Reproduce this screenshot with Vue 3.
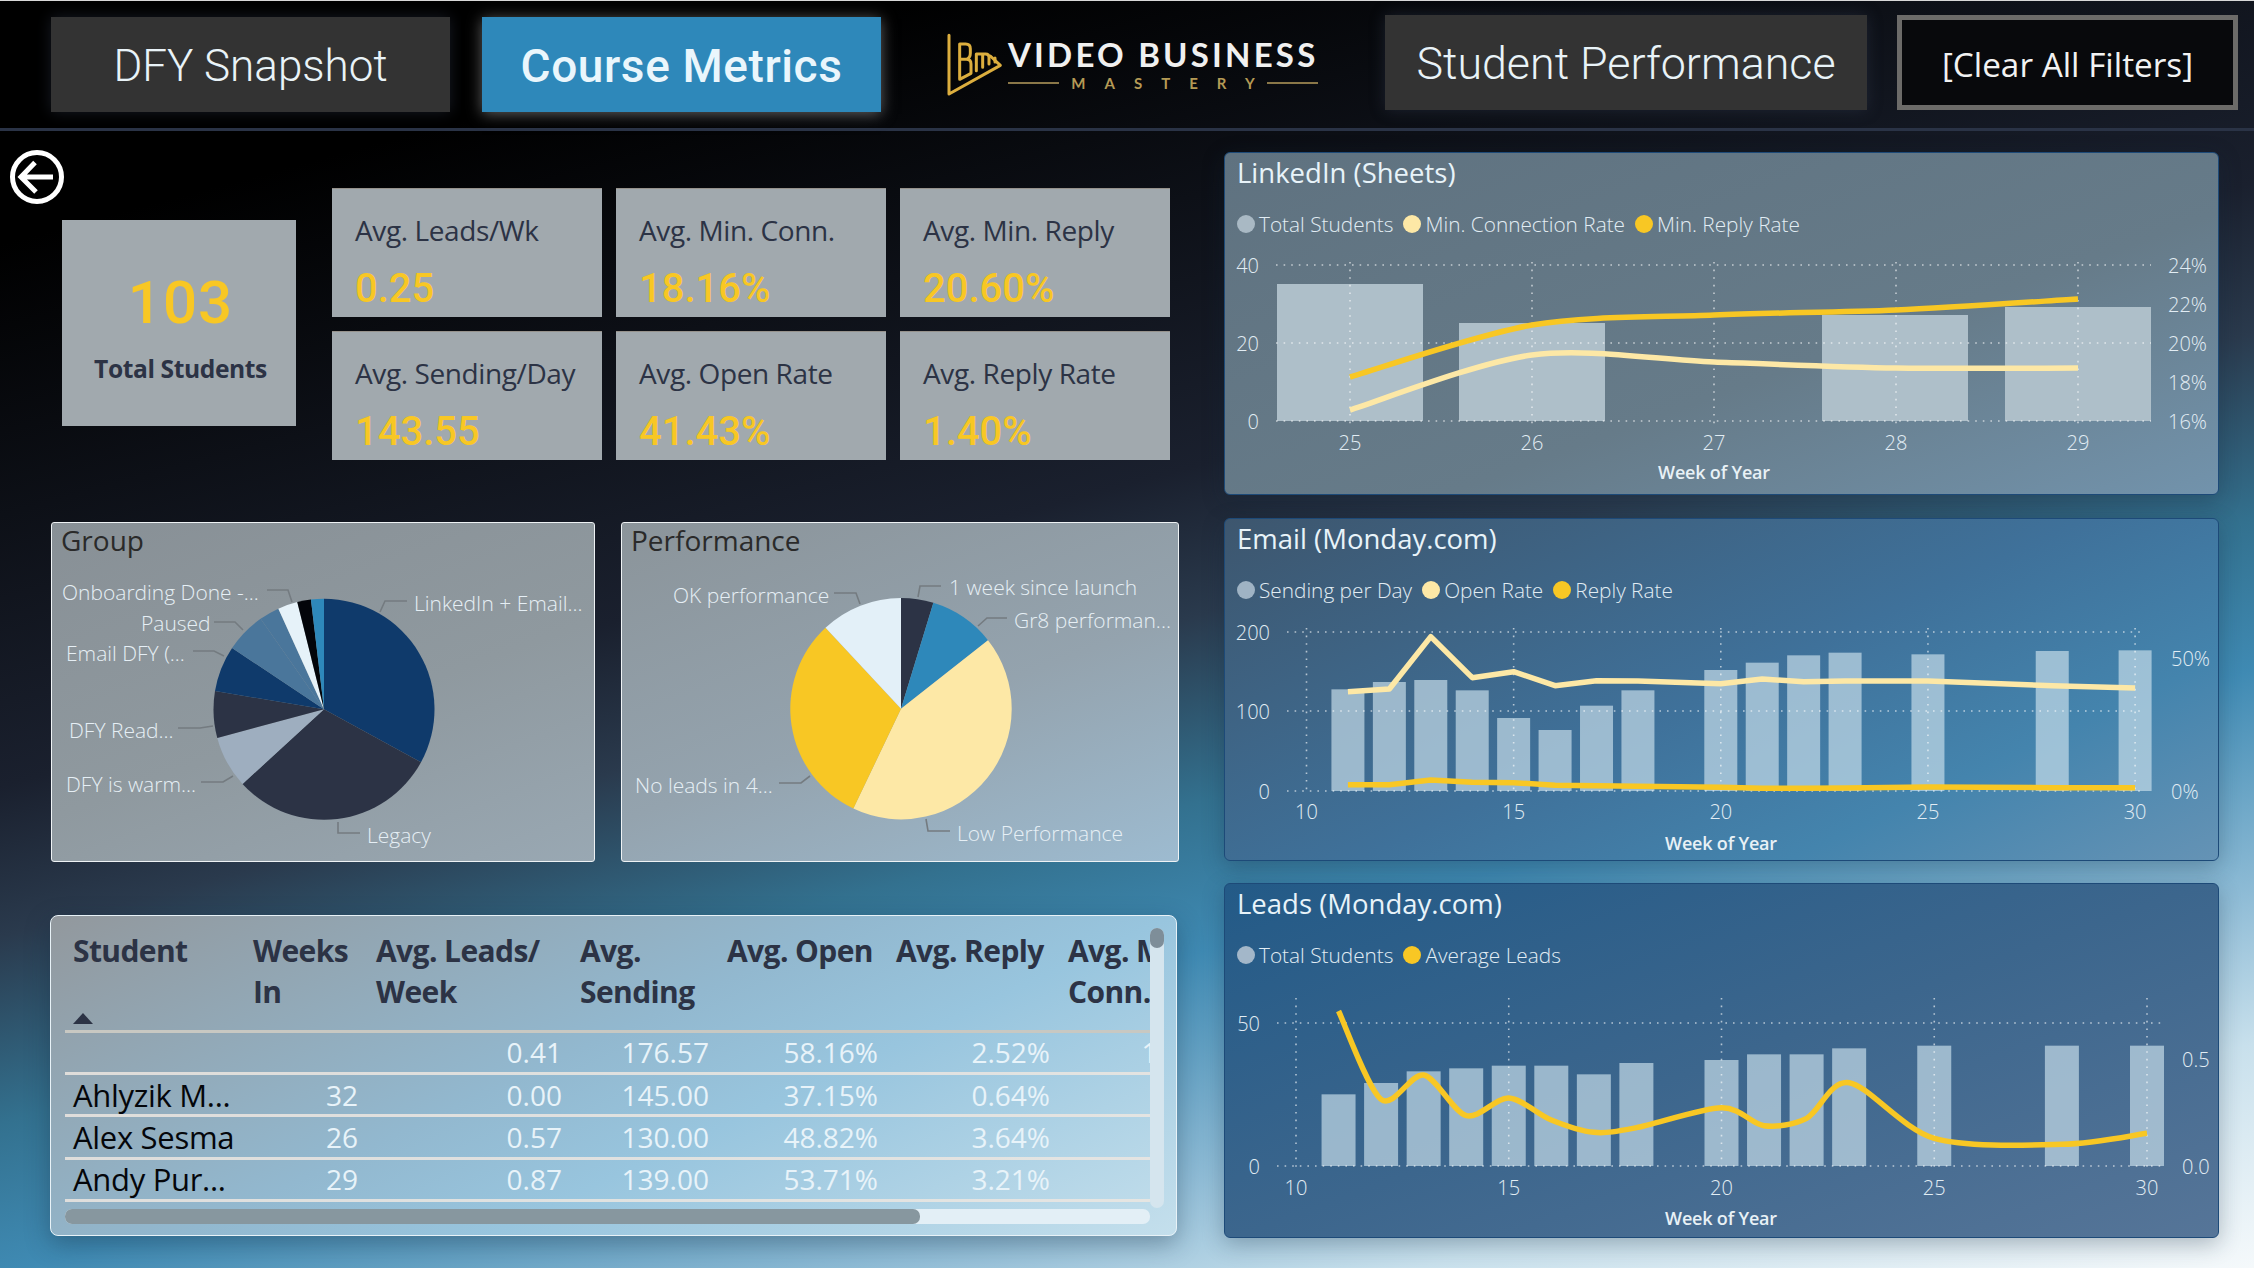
<template>
  <div class="page">
    <header class="topbar">
      <div class="tab tab-dark tab-first">DFY Snapshot</div>
      <div class="tab tab-active">Course Metrics</div>
      <div class="logo">
        <svg class="logo-mark" viewBox="40 40 180 195" width="60" height="65">
          <path d="M52 50V226L206 140L176 112" />
          <path d="M84 76V182L118 164V136Q118 122 104 122Q116 118 116 104V90Q116 76 102 76Z M84 122H104" />
          <path d="M134 156V106H162Q172 106 172 116V136 M153 106V146 M190 130V118" />
        </svg>
        <div class="logo-words">
          <div class="logo-name">VIDEO BUSINESS</div>
          <div class="logo-sub"><i></i><span>MASTERY</span><i></i></div>
        </div>
      </div>
      <div class="tab tab-dark tab-wide">Student Performance</div>
      <div class="clear">[Clear All Filters]</div>
    </header>
    <div class="divider"></div>

    <main class="content">
      <section class="left">
        <div class="kpis">
          <div class="kpi-side">
            <svg class="back" viewBox="0 0 56 56" width="56" height="56">
              <circle cx="28" cy="28" r="24.5" />
              <path d="M44 28H12M26 13.5L12 28L27 43" />
            </svg>
            <div class="total">
              <div class="total-num">103</div>
              <div class="total-label">Total Students</div>
            </div>
          </div>
          <div class="kpi-grid">
            <div v-for="k in kpis" :key="k[0]" class="kpi">
              <div class="kpi-label">{{ k[0] }}</div>
              <div class="kpi-value">{{ k[1] }}</div>
            </div>
          </div>
        </div>

        <div class="pies">
          <div v-for="p in pies" :key="p.title" class="pie-panel" :class="p.cls">
            <div class="pie-title">{{ p.title }}</div>
            <svg class="pie-svg" :viewBox="p.viewBox" :width="p.w" :height="p.h">
              <path v-for="(s, i) in p.slices" :key="i" :d="s.d" :fill="s.color" />
              <polyline v-for="(l, i) in p.labels" :key="'l' + i" class="leader" :points="l.line" />
              <text v-for="(l, i) in p.labels" :key="'t' + i" class="pie-label" :x="l.x" :y="l.y" dominant-baseline="central">{{ l.text }}</text>
            </svg>
          </div>
        </div>

        <div class="table-panel">
          <div class="table-clip">
            <table>
              <colgroup>
                <col v-for="w in colWidths" :key="w" :width="w" />
              </colgroup>
              <thead>
                <tr>
                  <th v-for="(h, i) in headers" :key="i">
                    {{ h }}
                    <div v-if="i === 0" class="sort"></div>
                  </th>
                </tr>
              </thead>
              <tbody>
                <tr v-for="(r, i) in rows" :key="i">
                  <td v-for="(c, j) in r" :key="j" :class="j === 0 ? 'name' : 'num'">{{ c }}</td>
                </tr>
              </tbody>
            </table>
          </div>
          <div class="vscroll"><div class="vthumb"></div></div>
          <div class="hscroll"><div class="hthumb"></div></div>
        </div>
      </section>

      <section class="right">
        <div v-for="c in charts" :key="c.title" class="chart" :class="c.cls" :style="{ height: c.height + 'px' }">
          <div class="chart-title">{{ c.title }}</div>
          <div class="legend">
            <span v-for="l in c.legend" :key="l[0]" class="legend-item">
              <b :style="{ background: l[1] }"></b>{{ l[0] }}
            </span>
          </div>
          <svg class="chart-svg" :viewBox="`1225 ${c.top + 87} 993 ${c.height - 88}`" width="993" :height="c.height - 88">
            <rect v-for="b in c.bars" :key="b.x" class="bar" :style="{ fill: c.barColor }" :x="b.x" :y="b.y" :width="c.barW" :height="c.zero - b.y" />
            <line v-for="y in c.hy" :key="'h' + y" class="grid" :x1="c.hx[0]" :x2="c.hx[1]" :y1="y" :y2="y" />
            <line v-for="w in c.ticks" :key="'v' + w[0]" class="grid" :x1="w[1]" :x2="w[1]" :y1="c.vy[0]" :y2="c.vy[1]" />
            <path v-for="l in c.lines" :key="l.color" class="series" :d="l.d" :stroke="l.color" />
            <text v-for="t in c.left" :key="'a' + t[0]" class="axis" :x="c.leftX" :y="t[1]" text-anchor="end" dominant-baseline="central">{{ t[0] }}</text>
            <text v-for="t in c.right" :key="'b' + t[0]" class="axis" :x="c.rightX" :y="t[1]" dominant-baseline="central">{{ t[0] }}</text>
            <text v-for="w in c.ticks" :key="'x' + w[0]" class="axis" :x="w[1]" :y="c.tickY" text-anchor="middle" dominant-baseline="central">{{ w[0] }}</text>
            <text class="axis-title" :x="c.midX" :y="c.titleY" text-anchor="middle" dominant-baseline="central">Week of Year</text>
          </svg>
        </div>
      </section>
    </main>
  </div>
</template>

<script setup>
const kpis = [
  ['Avg. Leads/Wk', '0.25'],
  ['Avg. Min. Conn.', '18.16%'],
  ['Avg. Min. Reply', '20.60%'],
  ['Avg. Sending/Day', '143.55'],
  ['Avg. Open Rate', '41.43%'],
  ['Avg. Reply Rate', '1.40%'],
]

function slicePath(cx, cy, r, from, to) {
  const pt = (deg) => {
    const a = (deg * Math.PI) / 180
    return `${(cx + r * Math.sin(a)).toFixed(2)} ${(cy - r * Math.cos(a)).toFixed(2)}`
  }
  return `M${cx} ${cy}L${pt(from)}A${r} ${r} 0 ${to - from > 180 ? 1 : 0} 1 ${pt(to)}Z`
}

function makeSlices(cx, cy, r, parts) {
  let from = 0
  return parts.map(([to, color]) => {
    const s = { d: slicePath(cx, cy, r, from, to), color }
    from = to
    return s
  })
}

// pie coordinates are page pixels, the viewBox shifts them into the panel
const pies = [
  {
    title: 'Group',
    cls: 'pie-group',
    viewBox: '52 564 541 296',
    w: 541,
    h: 296,
    slices: makeSlices(324, 709.3, 110.5, [
      [118.6, '#0f3a6b'],
      [227.5, '#2c3345'],
      [255, '#9eaebf'],
      [279.5, '#2c3345'],
      [303.7, '#0f3a6b'],
      [325, '#4a769b'],
      [335.6, '#4a769b'],
      [346, '#e6f2f9'],
      [353.2, '#03050a'],
      [360, '#2e88ba'],
    ]),
    labels: [
      { text: 'Onboarding Done -...', x: 62, y: 592, line: '292,602 288,590 267,590' },
      { text: 'Paused', x: 141, y: 623, line: '243,630 235,622 214,622' },
      { text: 'Email DFY (...', x: 66, y: 653, line: '224,656 214,651 193,651' },
      { text: 'DFY Read...', x: 69, y: 730, line: '213,726 200,728 178,728' },
      { text: 'DFY is warm...', x: 66, y: 784, line: '233,776 223,782 201,782' },
      { text: 'Legacy', x: 367, y: 835, line: '338,822 338,833 360,833' },
      { text: 'LinkedIn + Email...', x: 414, y: 603, line: '380,612 385,601 407,601' },
    ],
  },
  {
    title: 'Performance',
    cls: 'pie-perf',
    viewBox: '622 564 555 296',
    w: 555,
    h: 296,
    slices: makeSlices(901, 708.7, 110.7, [
      [17, '#2c3345'],
      [51.8, '#2e88ba'],
      [205.5, '#fde8a6'],
      [317, '#f8c724'],
      [360, '#e3f0f8'],
    ]),
    labels: [
      { text: 'OK performance', x: 673, y: 595, line: '860,604 856,593 834,593' },
      { text: '1 week since launch', x: 949, y: 587, line: '918,597 920,586 941,586' },
      { text: 'Gr8 performan...', x: 1014, y: 620, line: '978,626 987,618 1007,618' },
      { text: 'No leads in 4...', x: 635, y: 785, line: '810,776 801,783 779,783' },
      { text: 'Low Performance', x: 957, y: 833, line: '926,819 928,831 950,831' },
    ],
  },
]

const colWidths = [180, 123, 204, 147, 169, 172, 186]
const headers = ['Student', 'Weeks\nIn', 'Avg. Leads/\nWeek', 'Avg.\nSending', 'Avg. Open', 'Avg. Reply', 'Avg. Min.\nConn.']
const rows = [
  ['', '', '0.41', '176.57', '58.16%', '2.52%', '19.85%'],
  ['Ahlyzik M...', '32', '0.00', '145.00', '37.15%', '0.64%', '9.52%'],
  ['Alex Sesma', '26', '0.57', '130.00', '48.82%', '3.64%', '7.41%'],
  ['Andy Pur...', '29', '0.87', '139.00', '53.71%', '3.21%', '8.33%'],
]

function straight(pts) {
  return 'M' + pts.map((p) => p.join(' ')).join('L')
}

// cardinal spline, good enough for the power bi smooth lines
function smooth(pts, k = 0.15) {
  let d = `M${pts[0][0]} ${pts[0][1]}`
  for (let i = 0; i < pts.length - 1; i++) {
    const p0 = pts[i - 1] || pts[i]
    const p1 = pts[i]
    const p2 = pts[i + 1]
    const p3 = pts[i + 2] || p2
    d += `C${p1[0] + (p2[0] - p0[0]) * k} ${p1[1] + (p2[1] - p0[1]) * k} ${p2[0] - (p3[0] - p1[0]) * k} ${p2[1] - (p3[1] - p1[1]) * k} ${p2[0]} ${p2[1]}`
  }
  return d
}

const yellow = '#f8c724'
const cream = '#fde8a6'

const emailWeeks = [11, 12, 13, 14, 15, 16, 17, 18, 20, 21, 22, 23, 25, 28, 30]
const emailX = (w) => 1306.5 + (w - 10) * 41.43
const leadsX = (w) => 1296 + (w - 10) * 42.55
const zoomY = (base) => (v) => base + v / 3

const emailY = zoomY(510)
const leadsY = zoomY(870)

const charts = [
  {
    title: 'LinkedIn (Sheets)',
    cls: 'chart-linkedin',
    top: 152,
    height: 343,
    barColor: '#aebfc9',
    barW: 146,
    zero: 421,
    legend: [['Total Students', '#a9b9c4'], ['Min. Connection Rate', cream], ['Min. Reply Rate', yellow]],
    hx: [1276, 2151],
    vy: [262, 424],
    hy: [265, 343, 421],
    ticks: [[25, 1350], [26, 1532], [27, 1714], [28, 1896], [29, 2078]],
    left: [['40', 265], ['20', 343], ['0', 421]],
    leftX: 1259,
    right: [['24%', 265], ['22%', 304], ['20%', 343], ['18%', 382], ['16%', 421]],
    rightX: 2168,
    tickY: 442,
    titleY: 472,
    midX: 1714,
    bars: [{ x: 1277, y: 284 }, { x: 1459, y: 323 }, { x: 1822, y: 315 }, { x: 2005, y: 307 }],
    lines: [
      { color: cream, d: smooth([[1350, 410], [1532, 355], [1714, 362], [1896, 368], [2078, 368]]) },
      { color: yellow, d: smooth([[1350, 377], [1532, 325], [1714, 315], [1896, 310], [2078, 299]]) },
    ],
  },
  {
    title: 'Email (Monday.com)',
    cls: 'chart-email',
    top: 518,
    height: 343,
    barColor: 'rgba(200, 222, 235, 0.68)',
    barW: 33,
    zero: 791,
    legend: [['Sending per Day', '#9fb3c4'], ['Open Rate', cream], ['Reply Rate', yellow]],
    hx: [1287, 2145],
    vy: [628, 795],
    hy: [632, 711, 791],
    ticks: [[10, emailX(10)], [15, emailX(15)], [20, emailX(20)], [25, emailX(25)], [30, emailX(30)]],
    left: [['200', 632], ['100', 711], ['0', 791]],
    leftX: 1270,
    right: [['50%', 658], ['0%', 791]],
    rightX: 2171,
    tickY: 811,
    titleY: 843,
    midX: 1721,
    bars: [538, 516, 510, 541, 624, 660, 587, 541, 480, 458, 436, 428, 433, 423, 421].map((v, i) => ({
      x: emailX(emailWeeks[i]) - 16.5,
      y: emailY(v),
    })),
    lines: [
      {
        color: cream,
        d: straight([545, 537, 380, 503, 485, 527, 512, 513, 521, 507, 515, 513, 513, 527, 534].map((v, i) => [emailX(emailWeeks[i]), emailY(v)])),
      },
      {
        color: yellow,
        d: straight([824, 824, 810, 817, 818, 826, 827, 829, 832, 835, 835, 834, 831, 833, 833].map((v, i) => [emailX(emailWeeks[i]), emailY(v)])),
      },
    ],
  },
  {
    title: 'Leads (Monday.com)',
    cls: 'chart-leads',
    top: 883,
    height: 355,
    barColor: 'rgba(200, 222, 235, 0.68)',
    barW: 34,
    zero: 1166,
    legend: [['Total Students', '#a3b7c9'], ['Average Leads', yellow]],
    hx: [1277, 2162],
    vy: [998, 1170],
    hy: [1023, 1166],
    ticks: [[10, leadsX(10)], [15, leadsX(15)], [20, leadsX(20)], [25, leadsX(25)], [30, leadsX(30)]],
    left: [['50', 1023], ['0', 1166]],
    leftX: 1260,
    right: [['0.5', 1059], ['0.0', 1166]],
    rightX: 2182,
    tickY: 1187,
    titleY: 1218,
    midX: 1721,
    bars: [673, 639, 604, 595, 587, 587, 613, 579, 570, 553, 553, 535, 527, 527, 527].map((v, i) => ({
      x: leadsX(emailWeeks[i]) - 17,
      y: leadsY(v),
    })),
    lines: [
      {
        color: yellow,
        d: smooth([423, 688, 615, 737, 684, 750, 787, 773, 713, 767, 745, 638, 805, 823, 790].map((v, i) => [leadsX(emailWeeks[i]), leadsY(v)])),
      },
    ],
  },
]
</script>

<style>
html,
body {
  margin: 0;
  background: #000;
}
</style>

<style scoped>
.page {
  width: 2254px;
  height: 1268px;
  overflow: hidden;
  box-sizing: border-box;
  border-top: 1px solid #d8d8d8;
  background: linear-gradient(165deg, #000 0%, #000 13%, #1a202e 42%, #2a3a4d 50%, #33718f 60%, #3f8ab3 68%, #8fbcd6 80%, #c8e0ec 88%, #f5f9fb 100%);
  font-family: "Open Sans", "Liberation Sans", sans-serif;
}

/* top navigation */
.topbar {
  display: flex;
  align-items: flex-start;
  height: 127px;
  padding-left: 51px;
  box-sizing: border-box;
}

.tab {
  height: 95px;
  margin-top: 16px;
  padding-top: 2px;
  box-sizing: border-box;
  display: flex;
  align-items: center;
  justify-content: center;
  font-family: Roboto, "Liberation Sans", sans-serif;
  font-size: 44px;
  font-weight: 300;
  color: #e9f3f8;
}

.tab-dark {
  background: #333;
  box-shadow: 0 0 14px rgba(50, 60, 80, 0.45);
}

.tab-first {
  width: 399px;
  margin-right: 32px;
}

.tab-active {
  width: 399px;
  background: #2e88ba;
  color: #eaf6fc;
  font-size: 46px;
  font-weight: 500;
  letter-spacing: 0.6px;
  box-shadow: 0 2px 14px rgba(190, 190, 190, 0.5);
}

.tab-wide {
  width: 482px;
  margin-top: 14px;
  margin-left: 65px;
  font-size: 44.8px;
}

.logo {
  display: flex;
  width: 375px;
  height: 95px;
  margin: 16px 0 0 64px;
  align-items: center;
  box-sizing: border-box;
}

.logo-mark {
  flex: none;
  margin-right: 3px;
  fill: none;
  stroke: #dcae3e;
  stroke-width: 9;
  stroke-linejoin: round;
  stroke-linecap: round;
}

.logo-words {
  width: 310px;
}

.logo-name {
  font-family: Lato, "Open Sans", sans-serif;
  font-size: 33px;
  line-height: 34px;
  font-weight: 700;
  letter-spacing: 3.2px;
  color: #f0f0f0;
  white-space: nowrap;
}

.logo-sub {
  display: flex;
  align-items: center;
  justify-content: space-between;
  margin-top: 3px;
  font-family: Lato, "Open Sans", sans-serif;
  font-size: 15px;
  line-height: 18px;
  font-weight: 700;
  letter-spacing: 19px;
  color: #b59a55;
}

.logo-sub i {
  width: 51px;
  height: 2px;
  background: #8a7748;
}

.logo-sub span {
  margin-right: -19px;
}

.clear {
  width: 341px;
  height: 95px;
  margin: 14px 0 0 30px;
  padding-top: 2px;
  box-sizing: border-box;
  border: 5px solid #6c6b69;
  display: flex;
  align-items: center;
  justify-content: center;
  font-size: 33.3px;
  color: #f2f2f2;
  background: #08090c;
}

.divider {
  height: 3px;
  background: #2a3346;
}

.content {
  display: flex;
}

.left {
  width: 1224px;
  flex: none;
}

/* kpi cards */
.kpis {
  display: flex;
  height: 391px;
}

.kpi-side {
  width: 332px;
  flex: none;
  padding-top: 18px;
  box-sizing: border-box;
}

.back {
  display: block;
  margin-left: 9px;
  fill: none;
  stroke: #fff;
  stroke-width: 5;
}

.total {
  width: 234px;
  height: 206px;
  margin: 15px 0 0 62px;
  padding-left: 3px;
  box-sizing: border-box;
  background: #a1a9ae;
  display: flex;
  flex-direction: column;
  align-items: center;
}

.total-num {
  margin-top: 48px;
  font-family: Roboto, sans-serif;
  font-size: 60px;
  line-height: 70px;
  font-weight: 500;
  letter-spacing: 1px;
  color: #f8c724;
}

.total-label {
  margin-top: 14px;
  font-size: 24.6px;
  line-height: 34px;
  font-weight: 700;
  color: #2c3345;
  letter-spacing: -0.4px;
}

.kpi-grid {
  display: grid;
  grid-template-columns: repeat(3, 270px);
  grid-auto-rows: 129px;
  gap: 14px;
  margin-top: 57px;
}

.kpi {
  background: #a1a9ae;
  padding: 24px 0 0 23px;
  box-sizing: border-box;
  border-top: 1px solid #96928c;
}

.kpi-label {
  font-size: 28px;
  line-height: 34px;
  color: #2c3345;
  white-space: nowrap;
  letter-spacing: -0.4px;
}

.kpi-value {
  margin-top: 20px;
  font-family: Roboto, sans-serif;
  font-size: 40px;
  line-height: 44px;
  font-weight: 500;
  color: #f8c724;
}

/* pie panels */
.pies {
  display: flex;
  gap: 26px;
  margin-left: 51px;
}

.pie-panel {
  height: 340px;
  box-sizing: border-box;
  border: 1px solid #eef2f4;
  border-radius: 3px;
}

.pie-group {
  width: 544px;
  background: linear-gradient(160deg, #889096 0%, #8f999f 55%, #99a8b3 100%);
}

.pie-perf {
  width: 558px;
  background: linear-gradient(160deg, #8b949a 0%, #94a3ae 55%, #9dbbd0 100%);
}

.pie-title {
  height: 41px;
  line-height: 35px;
  padding-left: 9px;
  font-size: 28px;
  font-weight: 500;
  color: #2a2a2a;
}

.pie-svg {
  display: block;
}

.leader {
  fill: none;
  stroke: #747b80;
  stroke-width: 1.6;
}

.pie-label {
  font-size: 21px;
  font-weight: 300;
  fill: #e6eff5;
}

/* table */
.table-panel {
  position: relative;
  width: 1127px;
  height: 321px;
  margin: 53px 0 0 50px;
  box-sizing: border-box;
  border: 1px solid #e8f2f7;
  border-radius: 8px;
  background: linear-gradient(155deg, #92989d 0%, #92b8cf 45%, #98c5de 62%, #c4dfec 100%);
  box-shadow: 0 8px 24px rgba(20, 40, 60, 0.35);
}

.table-clip {
  width: 1085px;
  height: 290px;
  margin: 14px 0 0 14px;
  overflow: hidden;
}

table {
  width: 1181px;
  table-layout: fixed;
  border-collapse: collapse;
}

th {
  height: 101px;
  padding: 0 0 0 8px;
  vertical-align: top;
  text-align: left;
  box-sizing: border-box;
  font-size: 30px;
  line-height: 41px;
  font-weight: 700;
  letter-spacing: -0.6px;
  color: #2c3345;
  white-space: pre-line;
  border-bottom: 3px solid #c8c8c2;
}

.sort {
  width: 0;
  height: 0;
  margin-top: 42px;
  border-left: 10.5px solid transparent;
  border-right: 10.5px solid transparent;
  border-bottom: 11px solid #2c3345;
}

td {
  height: 42.4px;
  padding: 0 10px 0 8px;
  box-sizing: border-box;
  font-size: 28px;
  line-height: 38px;
  border-bottom: 3px solid rgba(236, 230, 224, 0.85);
  white-space: nowrap;
}

.name {
  color: #04060a;
  font-size: 31px;
  letter-spacing: -0.3px;
}

.num {
  text-align: right;
  color: #e8f3f9;
  font-weight: 400;
}

.vscroll {
  position: absolute;
  left: 1099px;
  top: 12px;
  width: 14px;
  height: 280px;
  border-radius: 7px;
  background: #d5e5ee;
}

.vthumb {
  height: 20px;
  border-radius: 7px;
  background: #7e8e99;
}

.hscroll {
  position: absolute;
  left: 14px;
  top: 293px;
  width: 1085px;
  height: 15px;
  border-radius: 7px;
  background: #e3eff6;
}

.hthumb {
  width: 855px;
  height: 15px;
  border-radius: 7px;
  background: #87979f;
}

/* right charts */
.right {
  width: 995px;
  flex: none;
  display: flex;
  flex-direction: column;
  gap: 23px;
  padding-top: 21px;
}

.chart {
  box-sizing: border-box;
  border: 1px solid #1d4a78;
  border-radius: 6px;
  box-shadow: 0 6px 22px rgba(20, 40, 60, 0.3);
}

.chart-linkedin {
  background: linear-gradient(160deg, #5f7280 0%, #667b89 60%, #7293ac 100%);
}

.chart-email {
  background: linear-gradient(155deg, #3d566e 0%, #3f719a 50%, #4484ad 75%, #6593b5 100%);
}

.chart-leads {
  margin-top: -1px;
  background: linear-gradient(160deg, #235a87 0%, #3c668d 50%, #567598 100%);
}

.chart-title {
  height: 40px;
  line-height: 40px;
  padding-left: 12px;
  font-size: 27.5px;
  font-weight: 500;
  color: #e8f3f9;
}

.legend {
  display: flex;
  gap: 10px;
  height: 30px;
  margin-top: 16px;
  padding-left: 12px;
  font-size: 20.8px;
  line-height: 30px;
  font-weight: 300;
  color: #e2edf4;
}

.legend-item {
  display: flex;
  align-items: center;
}

.legend-item b {
  width: 18px;
  height: 18px;
  margin-right: 4px;
  border-radius: 50%;
}

.chart-svg {
  display: block;
}

.grid {
  stroke: rgba(255, 255, 255, 0.62);
  stroke-width: 1.6;
  stroke-dasharray: 1.6 6;
}

.series {
  fill: none;
  stroke-width: 5.5;
  stroke-linejoin: round;
}

.axis {
  font-size: 20px;
  font-weight: 300;
  fill: #e2edf4;
}

.axis-title {
  font-size: 18px;
  font-weight: 600;
  fill: #e8f1f6;
  letter-spacing: -0.2px;
}
</style>
